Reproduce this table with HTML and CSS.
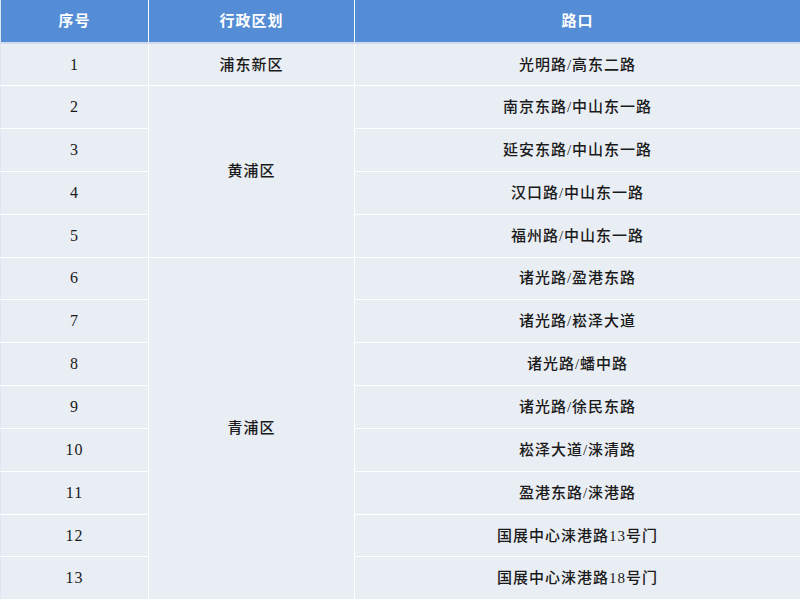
FILE: index.html
```html
<!DOCTYPE html>
<html lang="zh">
<head>
<meta charset="utf-8">
<link rel="stylesheet" href="styles.css">
</head>
<body>
<table class="grid">
  <colgroup>
    <col class="c1"><col class="c2"><col class="c3">
  </colgroup>
  <thead>
    <tr><th>序号</th><th>行政区划</th><th>路口</th></tr>
  </thead>
  <tbody>
    <tr><td class="num">1</td><td>浦东新区</td><td>光明路/高东二路</td></tr>
    <tr><td class="num">2</td><td rowspan="4">黄浦区</td><td>南京东路/中山东一路</td></tr>
    <tr><td class="num">3</td><td>延安东路/中山东一路</td></tr>
    <tr><td class="num">4</td><td>汉口路/中山东一路</td></tr>
    <tr><td class="num">5</td><td>福州路/中山东一路</td></tr>
    <tr><td class="num">6</td><td rowspan="8">青浦区</td><td>诸光路/盈港东路</td></tr>
    <tr><td class="num">7</td><td>诸光路/崧泽大道</td></tr>
    <tr><td class="num">8</td><td>诸光路/蟠中路</td></tr>
    <tr><td class="num">9</td><td>诸光路/徐民东路</td></tr>
    <tr><td class="num">10</td><td>崧泽大道/涞清路</td></tr>
    <tr><td class="num">11</td><td>盈港东路/涞港路</td></tr>
    <tr><td class="num">12</td><td>国展中心涞港路13号门</td></tr>
    <tr><td class="num">13</td><td>国展中心涞港路18号门</td></tr>
  </tbody>
</table>
</body>
</html>
```
FILE: styles.css
```css
html, body {
  margin: 0;
  padding: 0;
  background: #e9edf4;
}
.grid {
  width: 800px;
  height: 600px;
  border-collapse: collapse;
  table-layout: fixed;
  font-family: "Liberation Serif", "Noto Sans CJK SC", serif;
  font-size: 15px;
  letter-spacing: 1px;
  color: #1a1a1a;
}
.c1 { width: 148px; }
.c2 { width: 206px; }
.c3 { width: 446px; }
.grid tr { height: 42.857px; }
.grid th, .grid td {
  border: 1px solid #ffffff;
  text-align: center;
  vertical-align: middle;
  padding: 0;
  line-height: 18px;
}
.grid tr:first-child th, .grid tr:first-child td { border-top: none; }
.grid th:first-child, .grid td:first-child { border-left: 1px solid #dfe6f2; }
.grid th {
  background: #548dd6;
  color: #ffffff;
  font-weight: bold;
  border-bottom: 2px solid #cfdcf0;
}
.grid td {
  background: #e9edf4;
  font-weight: 500;
}
.grid td.num {
  font-weight: normal;
  font-size: 16px;
}
```
